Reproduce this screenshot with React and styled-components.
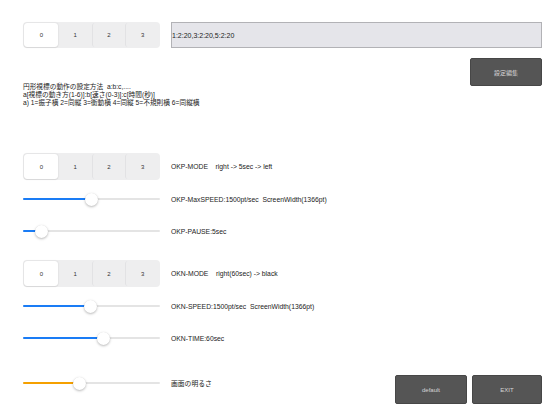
import React from "react";
import styled, { createGlobalStyle } from "styled-components";

const Global = createGlobalStyle`
  html, body { margin: 0; padding: 0; background: #fff; }
  body { font-family: "Liberation Sans", "Noto Sans CJK JP", sans-serif; color: #222; }
`;

const Page = styled.div`
  width: 552px;
  height: 414px;
  box-sizing: border-box;
  padding: 22px 10px 0 23px;
  display: flex;
  flex-direction: column;
  overflow: hidden;
`;

const TopRow = styled.div`
  display: flex;
  gap: 11px;
  height: 26px;
`;

const Segmented = styled.div`
  width: 137px;
  height: ${(p) => p.$h || 26}px;
  box-sizing: border-box;
  padding: 1px;
  background: #eeeeef;
  border-radius: 4px;
  display: grid;
  grid-template-columns: repeat(4, 1fr);
  flex: none;
`;

const Segment = styled.div`
  display: flex;
  align-items: center;
  justify-content: center;
  font-size: 6px;
  color: #333;
  border-radius: 3px;
  background: ${(p) => (p.$active ? "#fff" : "transparent")};
  box-shadow: ${(p) => (p.$active ? "0 0 1.5px rgba(0,0,0,0.18), 0 1px 1px rgba(0,0,0,0.06)" : "none")};
  border-left: 1px solid ${(p) => (p.$sep ? "#e2e2e4" : "transparent")};
`;

const TextField = styled.div`
  flex: 1;
  box-sizing: border-box;
  height: 26px;
  background: #e5e5ea;
  border: 1px solid #b2b2b6;
  display: flex;
  align-items: center;
  font-size: 7px;
  color: #222;
`;

const InfoRow = styled.div`
  display: flex;
  justify-content: space-between;
  align-items: flex-start;
  margin-top: 10px;
`;

const Description = styled.div`
  margin-top: 25px;
  font-size: 6.7px;
  line-height: 8px;
  color: #222;
  white-space: pre;
`;

const DarkButton = styled.div`
  width: ${(p) => p.$w || 72}px;
  height: ${(p) => p.$h || 28}px;
  box-sizing: border-box;
  background: #555;
  border: 1px solid #474747;
  border-radius: 2px;
  display: flex;
  align-items: center;
  justify-content: center;
  color: #d6d6d6;
  font-size: 6px;
  flex: none;
`;

const Row = styled.div`
  display: grid;
  grid-template-columns: 137px 1fr;
  column-gap: 11px;
  align-items: center;
  height: ${(p) => p.$h}px;
  margin-top: ${(p) => p.$mt || 0}px;
`;

const Label = styled.div`
  font-size: 6.8px;
  color: #222;
  white-space: pre;
`;

const SliderWrap = styled.div`
  position: relative;
  width: 137px;
  height: 13px;
  display: flex;
  align-items: center;
`;

const Track = styled.div`
  position: relative;
  width: 100%;
  height: 2px;
  background: #e4e4e4;
  border-radius: 1px;
`;

const Fill = styled.div`
  position: absolute;
  left: 0;
  top: 0;
  height: 2px;
  border-radius: 1px;
  background: ${(p) => p.$color};
`;

const Thumb = styled.div`
  position: absolute;
  top: 0;
  width: 13px;
  height: 13px;
  border-radius: 50%;
  background: #fff;
  box-shadow: 0 1px 2.5px rgba(0, 0, 0, 0.28), 0 0 0.5px rgba(0, 0, 0, 0.1);
`;

const BottomRow = styled.div`
  display: flex;
  align-items: flex-start;
  margin-top: 21px;
`;

const BottomLeft = styled.div`
  display: grid;
  grid-template-columns: 137px 1fr;
  column-gap: 11px;
  align-items: center;
  height: 16px;
  flex: 1;
`;

const Buttons = styled.div`
  display: flex;
  gap: 5px;
`;

function SegControl({ h }) {
  return (
    <Segmented $h={h}>
      <Segment $active>0</Segment>
      <Segment>1</Segment>
      <Segment $sep>2</Segment>
      <Segment $sep>3</Segment>
    </Segmented>
  );
}

function Slider({ value, color = "#1a7cf5" }) {
  const center = 6.5 + value * 124;
  return (
    <SliderWrap>
      <Track>
        <Fill $color={color} style={{ width: `${center}px` }} />
      </Track>
      <Thumb style={{ left: `${center - 6.5}px` }} />
    </SliderWrap>
  );
}

export default function App() {
  return (
    <>
      <Global />
      <Page>
        <TopRow>
          <SegControl />
          <TextField>1:2:20,3:2:20,5:2:20</TextField>
        </TopRow>
        <InfoRow>
          <Description>
            {"円形視標の動作の設定方法  a:b:c,....\na[視標の動き方(1-6)]:b[速さ(0-3)]:c[時間(秒)]\na) 1=振子横 2=同縦 3=衝動横 4=同縦 5=不規則横 6=同縦横"}
          </Description>
          <DarkButton>設定編集</DarkButton>
        </InfoRow>

        <Row $h={27} $mt={46}>
          <SegControl h={27} />
          <Label>{"OKP-MODE    right -> 5sec -> left"}</Label>
        </Row>
        <Row $h={32} $mt={3}>
          <Slider value={0.496} />
          <Label>{"OKP-MaxSPEED:1500pt/sec  ScreenWidth(1366pt)"}</Label>
        </Row>
        <Row $h={32}>
          <Slider value={0.093} />
          <Label>{"OKP-PAUSE:5sec"}</Label>
        </Row>

        <Row $h={27} $mt={13}>
          <SegControl h={27} />
          <Label>{"OKN-MODE    right(60sec) -> black"}</Label>
        </Row>
        <Row $h={32} $mt={3}>
          <Slider value={0.49} />
          <Label>{"OKN-SPEED:1500pt/sec  ScreenWidth(1366pt)"}</Label>
        </Row>
        <Row $h={32}>
          <Slider value={0.6} />
          <Label>{"OKN-TIME:60sec"}</Label>
        </Row>

        <BottomRow>
          <BottomLeft>
            <Slider value={0.407} color="#f5a000" />
            <Label>画面の明るさ</Label>
          </BottomLeft>
          <Buttons>
            <DarkButton $w={72} $h={29}>default</DarkButton>
            <DarkButton $w={70} $h={29}>EXIT</DarkButton>
          </Buttons>
        </BottomRow>
      </Page>
    </>
  );
}
